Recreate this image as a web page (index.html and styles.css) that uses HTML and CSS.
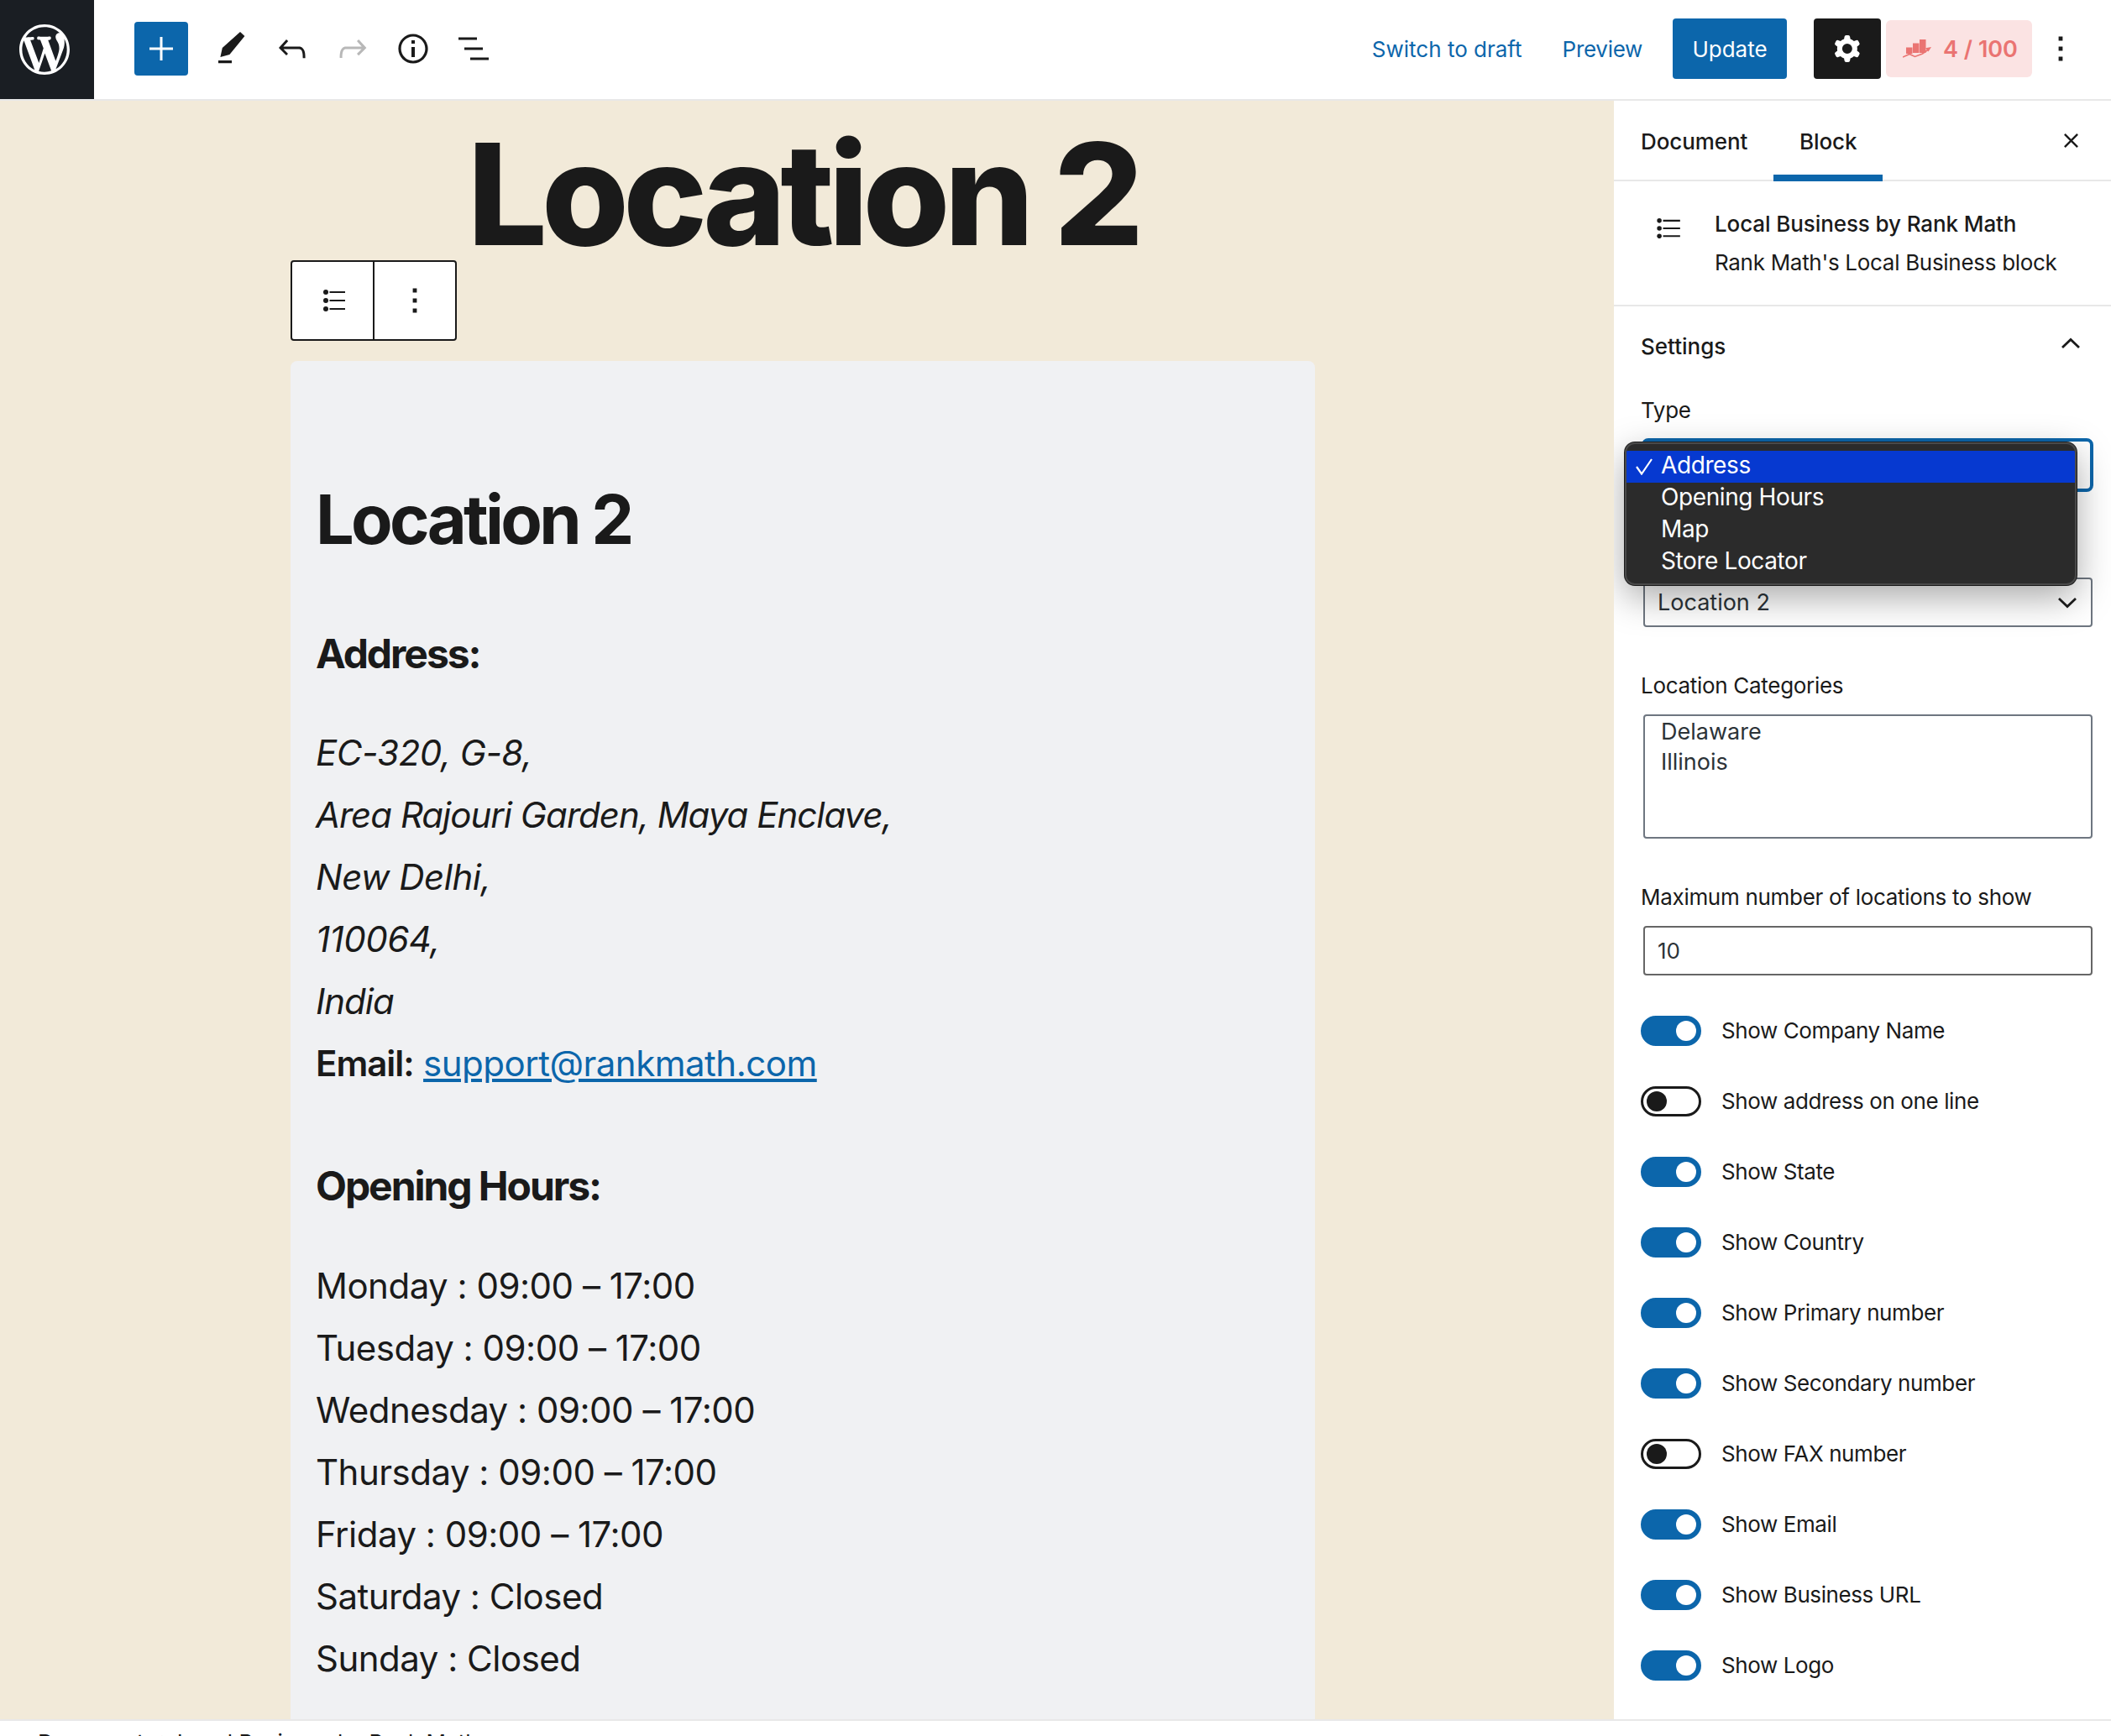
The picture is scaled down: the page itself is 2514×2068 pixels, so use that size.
FILE: index.html
```html
<!DOCTYPE html>
<html lang="en">
<head>
<meta charset="utf-8">
<title>Edit Location 2</title>
<link rel="stylesheet" href="styles.css">
</head>
<body>
<div class="app">
  <header class="topbar">
    <div class="wp-logo">
      <svg class="wp-svg" viewBox="0 0 20 20"><path fill="#fff" d="M20 10c0-5.51-4.49-10-10-10C4.48 0 0 4.49 0 10c0 5.52 4.48 10 10 10 5.51 0 10-4.48 10-10zM7.78 15.37L4.37 6.22c.55-.02 1.17-.08 1.17-.08.5-.06.44-1.13-.06-1.11 0 0-1.45.11-2.37.11-.18 0-.37 0-.58-.01C4.12 2.69 6.87 1.11 10 1.11c2.33 0 4.45.87 6.05 2.34-.68-.11-1.65.39-1.65 1.58 0 .74.45 1.36.9 2.1.35.61.55 1.36.55 2.46 0 1.49-1.4 5-1.4 5l-3.03-8.37c.54-.02.82-.17.82-.17.5-.05.44-1.25-.06-1.22 0 0-1.44.12-2.38.12-.87 0-2.33-.12-2.33-.12-.5-.03-.56 1.2-.06 1.22l.92.08 1.26 3.41zM17.41 10c.24-.64.74-1.87.43-4.25.7 1.29 1.05 2.71 1.05 4.25 0 3.29-1.73 6.24-4.4 7.78.97-2.59 1.94-5.2 2.92-7.78zM6.1 18.09C3.12 16.65 1.11 13.53 1.11 10c0-1.3.23-2.48.72-3.59C3.25 10.3 4.67 14.2 6.1 18.09zm4.03-6.63l2.58 6.98c-.86.29-1.76.45-2.71.45-.79 0-1.57-.11-2.29-.33.81-2.38 1.62-4.74 2.42-7.1z"/></svg>
    </div>
    <div class="tools">
      <button class="add-btn"><svg class="icon" viewBox="0 0 24 24"><path fill="#fff" d="M11.25 5h1.5v6.25H19v1.5h-6.25V19h-1.5v-6.25H5v-1.5h6.25z"/></svg></button>
      <svg class="icon tool" viewBox="0 0 24 24"><path fill="#1a1a1a" d="M17 2l2.700 2.500-9 11-5.500 1.500 1.200-5.500zM4 19h8v1.600H4z"/></svg>
      <svg class="icon tool" viewBox="0 0 24 24"><path fill="#1a1a1a" d="M18.3 11.7c-.6-.6-1.4-.9-2.3-.9H6.7l2.9-3.3-1.1-1-4.5 5L8.5 16l1-1-2.7-2.7H16c.5 0 .9.2 1.3.5 1 1 1 3.4 1 4.5v.3h1.5v-.2c0-1.5 0-4.3-1.5-5.7z"/></svg>
      <svg class="icon tool" viewBox="0 0 24 24"><path fill="#b8b8b8" d="M15.6 6.5l-1.1 1 2.9 3.3H8c-.9 0-1.7.3-2.3.9-1.4 1.5-1.4 4.2-1.4 5.6v.2h1.5v-.3c0-1.1 0-3.5 1-4.5.3-.3.7-.5 1.3-.5h9.2L14.5 15l1.1 1.1 4.6-4.6-4.6-5z"/></svg>
      <svg class="icon tool" viewBox="0 0 24 24"><path fill="#1a1a1a" d="M12 3.2c-4.8 0-8.8 3.9-8.8 8.8 0 4.8 3.9 8.8 8.8 8.8 4.8 0 8.8-3.900 8.800-8.800 0-4.800-4-8.800-8.800-8.800zm0 16c-4 0-7.200-3.300-7.200-7.200C4.800 8 8 4.800 12 4.800s7.200 3.300 7.200 7.200c0 4-3.200 7.200-7.200 7.200zM11 17h2v-6h-2v6zm0-8h2V7h-2v2z"/></svg>
      <svg class="icon tool" viewBox="0 0 24 24"><path fill="#1a1a1a" d="M3 5.250h11v1.500H3zM6.500 11.250h11v1.500h-11zM10 17.250h11v1.500H10z"/></svg>
    </div>
    <div class="actions">
      <a class="link switch">Switch to draft</a>
      <a class="link preview">Preview</a>
      <button class="update">Update</button>
      <button class="gear"><svg class="icon" viewBox="0 0 24 24"><path fill="#fff" fill-rule="evenodd" d="M10.289 4.836A1 1 0 0111.275 4h1.306a1 1 0 01.987.836l.244 1.466c.787.26 1.503.679 2.108 1.218l1.393-.522a1 1 0 011.216.437l.653 1.13a1 1 0 01-.23 1.273l-1.148.944a6.025 6.025 0 010 2.435l1.149.946a1 1 0 01.23 1.272l-.653 1.13a1 1 0 01-1.216.437l-1.394-.522c-.605.54-1.32.958-2.108 1.218l-.244 1.466a1 1 0 01-.987.836h-1.306a1 1 0 01-.986-.836l-.244-1.466a5.995 5.995 0 01-2.108-1.218l-1.394.522a1 1 0 01-1.217-.436l-.653-1.131a1 1 0 01.23-1.272l1.149-.946a6.026 6.026 0 010-2.435l-1.148-.944a1 1 0 01-.23-1.272l.653-1.131a1 1 0 011.217-.437l1.393.522a5.994 5.994 0 012.108-1.218l.244-1.466zM14.929 12a3 3 0 11-6 0 3 3 0 016 0z"/></svg></button>
      <div class="score">
        <svg class="rm-icon" viewBox="0 0 34 22"><path fill="#ea7472" d="M4 9.500h7.500V17H4zM12 4.500h7.500V16H12zM20 0h7.500v16H20z"/><path fill="none" stroke="#ea7472" stroke-width="1.600" d="M0 21l8-3.500 6.500 3 9-3.500 7-5"/><path fill="#ea7472" d="M34 9l-7 1.200 3.500 4.300z"/></svg>
        <span>4 / 100</span>
      </div>
      <svg class="icon kebab" viewBox="0 0 24 24"><path fill="#1a1a1a" d="M10.800 4.800h2.400v2.400h-2.400zM10.800 10.800h2.400v2.400h-2.400zM10.800 16.800h2.400v2.400h-2.400z"/></svg>
    </div>
  </header>

  <main class="main">
    <section class="canvas">
      <div class="column">
        <h1 class="post-title">Location 2</h1>
        <div class="block-toolbar">
          <div class="tb-cell"><svg class="list-icon" viewBox="0 0 26 26"><path fill="#1a1a1a" d="M7.500 2h18.500v2H7.500zM7.500 12h18.500v2H7.500zM7.500 22h18.500v2H7.500z"/><circle fill="#1a1a1a" cx="3" cy="3" r="3"/><circle fill="#1a1a1a" cx="3" cy="13" r="3"/><circle fill="#1a1a1a" cx="3" cy="23" r="3"/></svg></div>
          <div class="tb-cell tb-last"><svg class="icon" viewBox="0 0 24 24"><path fill="#1a1a1a" d="M10.800 4.800h2.400v2.400h-2.400zM10.800 10.800h2.400v2.400h-2.400zM10.800 16.800h2.400v2.400h-2.400z"/></svg></div>
        </div>
        <article class="card">
          <h2 class="loc-name">Location 2</h2>
          <h4 class="sub sub-first">Address:</h4>
          <div class="lines first-lines">
            <p class="addr">EC-320, G-8,</p>
            <p class="addr addr-tight">Area Rajouri Garden, Maya Enclave,</p>
            <p class="addr">New Delhi,</p>
            <p class="addr">110064,</p>
            <p class="addr addr-tight">India</p>
            <p><strong>Email:</strong> <a class="mail">support@rankmath.com</a></p>
          </div>
          <h4 class="sub sub-hours">Opening Hours:</h4>
          <div class="lines hours">
            <p>Monday : 09:00 – 17:00</p>
            <p>Tuesday : 09:00 – 17:00</p>
            <p>Wednesday : 09:00 – 17:00</p>
            <p>Thursday : 09:00 – 17:00</p>
            <p>Friday : 09:00 – 17:00</p>
            <p>Saturday : Closed</p>
            <p>Sunday : Closed</p>
          </div>
        </article>
      </div>
    </section>

    <aside class="sidebar">
      <div class="tabs">
        <div class="tab tab-doc">Document</div>
        <div class="tab tab-active">Block</div>
        <svg class="close" viewBox="0 0 20 20"><path fill="none" stroke="#1a1a1a" stroke-width="2.500" d="M2 2l16 16M18 2L2 18"/></svg>
      </div>
      <div class="block-card">
        <svg class="bc-icon" viewBox="0 0 30 26"><path fill="#1a1a1a" d="M8 2h22v2.200H8zM8 12h22v2.200H8zM8 22h22v2.200H8z"/><circle fill="#1a1a1a" cx="3.200" cy="3.100" r="3"/><circle fill="#1a1a1a" cx="3.200" cy="13.100" r="3"/><circle fill="#1a1a1a" cx="3.200" cy="23.100" r="3"/></svg>
        <div class="bc-text">
          <div class="bc-title">Local Business by Rank Math</div>
          <div class="bc-desc">Rank Math's Local Business block</div>
        </div>
      </div>
      <div class="panel">
        <div class="panel-head">
          <span>Settings</span>
          <svg class="chev-up" viewBox="0 0 24 14"><path fill="none" stroke="#1a1a1a" stroke-width="2.800" d="M2 12L12 2.500 22 12"/></svg>
        </div>
        <div class="field-label label-type">Type</div>
        <div class="select-wrap">
          <div class="control focus">
            <svg class="chev-down" viewBox="0 0 24 14"><path fill="none" stroke="#1e1e1e" stroke-width="2.800" d="M2 2l10 9.500L22 2"/></svg>
          </div>
          <div class="menu">
            <div class="opt opt-on"><svg class="tick" viewBox="0 0 20 20"><path fill="none" stroke="#fff" stroke-width="2.200" d="M1 10l6 8.500L19 1"/></svg>Address</div>
            <div class="opt">Opening Hours</div>
            <div class="opt">Map</div>
            <div class="opt">Store Locator</div>
          </div>
        </div>
        <div class="control location">
          <span>Location 2</span>
          <svg class="chev-down" viewBox="0 0 24 14"><path fill="none" stroke="#1e1e1e" stroke-width="2.800" d="M2 2l10 9.500L22 2"/></svg>
        </div>
        <div class="field-label label-gap">Location Categories</div>
        <div class="control multi">
          <div>Delaware</div>
          <div>Illinois</div>
        </div>
        <div class="field-label label-gap">Maximum number of locations to show</div>
        <div class="control number">10</div>
        <div class="toggles">
          <div class="toggle-row"><span class="toggle on"></span><span class="toggle-text">Show Company Name</span></div>
          <div class="toggle-row"><span class="toggle"></span><span class="toggle-text">Show address on one line</span></div>
          <div class="toggle-row"><span class="toggle on"></span><span class="toggle-text">Show State</span></div>
          <div class="toggle-row"><span class="toggle on"></span><span class="toggle-text">Show Country</span></div>
          <div class="toggle-row"><span class="toggle on"></span><span class="toggle-text">Show Primary number</span></div>
          <div class="toggle-row"><span class="toggle on"></span><span class="toggle-text">Show Secondary number</span></div>
          <div class="toggle-row"><span class="toggle"></span><span class="toggle-text">Show FAX number</span></div>
          <div class="toggle-row"><span class="toggle on"></span><span class="toggle-text">Show Email</span></div>
          <div class="toggle-row"><span class="toggle on"></span><span class="toggle-text">Show Business URL</span></div>
          <div class="toggle-row"><span class="toggle on"></span><span class="toggle-text">Show Logo</span></div>
        </div>
      </div>
    </aside>
  </main>

  <footer class="statusbar">Document → Local Business by Rank Math</footer>
</div>
</body>
</html>
```

FILE: styles.css
```css
* { box-sizing: border-box; }
html, body { margin: 0; height: 100%; overflow: hidden; }
body { font-family: Inter, "Noto Sans", sans-serif; font-size: 26px; color: #1a1a1a; background: #fff; }
button { font: inherit; border: 0; padding: 0; }
p, h1, h2, h4 { margin: 0; }

.app { display: flex; flex-direction: column; height: 100vh; }

/* Top bar */
.topbar { flex: 0 0 120px; display: flex; align-items: flex-start; background: #fff; border-bottom: 2px solid #e8e8e8; }
.wp-logo { flex: 0 0 112px; height: 118px; background: #1a1e23; display: flex; align-items: center; justify-content: center; padding: 0 6px 0 0; }
.wp-svg { width: 60px; height: 60px; }
.tools { display: flex; align-items: center; height: 116px; margin-left: 48px; }
.add-btn { width: 64px; height: 64px; background: #0c66ab; border-radius: 4px; display: flex; align-items: center; justify-content: center; margin-right: 28px; }
.icon { width: 48px; height: 48px; display: block; }
.tool { margin-right: 24px; }
.actions { margin-left: auto; display: flex; align-items: center; height: 116px; }
.link { color: #0c66ab; }
.switch { margin-right: 48px; }
.preview { margin-right: 36px; letter-spacing: -0.3px; }
.update { width: 136px; height: 72px; background: #0c66ab; color: #fff; border-radius: 4px; margin-right: 32px; }
.gear { width: 80px; height: 72px; background: #1a1a1a; border-radius: 4px; display: flex; align-items: center; justify-content: center; margin-right: 6px; }
.score { width: 174px; height: 68px; background: #fbe3e3; border-radius: 6px; display: flex; align-items: center; justify-content: center; gap: 14px; padding-left: 3px; color: #ea7472; font-weight: 600; font-size: 27px; }
.rm-icon { width: 34px; height: 22px; }
.kebab { margin-left: 10px; margin-right: 36px; }

/* Main */
.main { flex: 1; display: flex; min-height: 0; }
.canvas { flex: 1; min-width: 0; background: #f2ead9; overflow: hidden; padding-top: 32px; }
.column { width: 1220px; margin-left: 346px; }
.post-title { font-size: 168px; line-height: 158px; font-weight: 800; letter-spacing: -0.04em; text-align: center; color: #1a1a1a; }
.block-toolbar { display: flex; width: 198px; height: 96px; background: #fff; border: 2px solid #1a1a1a; border-radius: 4px; }
.tb-cell { flex: 1; display: flex; align-items: center; justify-content: center; border-right: 2px solid #1a1a1a; }
.tb-last { border-right: 0; }
.list-icon { width: 26px; height: 26px; margin-left: 3px; }
.card { margin-top: 24px; background: #f0f1f3; border-radius: 8px 8px 0 0; padding: 138.500px 30px 120px; }
.loc-name { font-size: 81px; line-height: 100px; font-weight: 700; letter-spacing: -0.046em; }
.sub { font-size: 48px; line-height: 60px; font-weight: 700; letter-spacing: -0.043em; }
.sub-first { margin-top: 80px; }
.sub-hours { margin-top: 79px; }
.lines { font-size: 42px; line-height: 74px; font-weight: 400; letter-spacing: -0.5px; }
.first-lines { margin-top: 51px; }
.hours { margin-top: 52px; }
.addr { font-style: italic; letter-spacing: -0.5px; }
.addr-tight { letter-spacing: -1px; }
.lines strong { font-weight: 600; letter-spacing: -1px; }
.mail { color: #0c66ab; text-decoration: underline; }

/* Sidebar */
.sidebar { flex: 0 0 592px; background: #fff; overflow: hidden; }
.tabs { height: 96px; display: flex; align-items: center; border-bottom: 2px solid #e8e8e8; position: relative; }
.tab { height: 96px; padding-top: 2px; display: flex; align-items: center; font-weight: 500; letter-spacing: -0.1px; }
.tab-doc { margin-left: 32px; }
.tab-active { margin-left: 31px; width: 130px; justify-content: center; border-bottom: 8px solid #0c66ab; padding-top: 8px; margin-bottom: -2px; }
.close { width: 19px; height: 19px; margin-left: auto; margin-right: 38px; }

.block-card { height: 149px; border-bottom: 2px solid #e8e8e8; display: flex; align-items: flex-start; padding: 32px 0 0 51px; }
.bc-icon { width: 28px; height: 24px; margin-top: 12px; flex: none; }
.bc-text { margin-left: 41px; }
.bc-title { line-height: 38px; font-weight: 500; letter-spacing: -0.1px; }
.bc-desc { line-height: 38px; margin-top: 8px; letter-spacing: -0.3px; }

.panel { padding: 0 20px 0 33px; }
.panel-head { height: 94px; display: flex; align-items: center; justify-content: space-between; font-weight: 500; padding-right: 16px; margin-left: -1px; }
.chev-up { width: 24px; height: 14px; margin-top: -6px; }
.field-label { line-height: 30px; letter-spacing: -0.3px; margin-left: -1px; }
.label-type { margin-top: 15px; }
.label-gap { margin-top: 55px; margin-bottom: -1px; }
.select-wrap { position: relative; margin-top: 18px; }
.control { margin: 0 2px; background: #fff; border: 2px solid #6e7680; border-radius: 4px; }
.control.focus { margin: 0 1px 0 0; height: 64px; border: 4px solid #0c66ab; border-radius: 8px; display: flex; align-items: center; justify-content: flex-end; padding: 0 14px 4px 0; }
.menu { position: absolute; left: -20px; top: 5px; width: 538px; height: 170px; padding: 8px 0 0; background: #2b2b2b; border: 2px solid #4a4a4a; border-radius: 12px; color: #fff; font-size: 28px; line-height: 34px; letter-spacing: -0.4px; box-shadow: 0 14px 44px rgba(0,0,0,.35), 0 0 0 1px #222; overflow: hidden; }
.opt { height: 38px; padding-left: 41px; position: relative; white-space: nowrap; }
.opt-on { background: #0639d0; }
.tick { position: absolute; left: 11px; top: 9px; width: 20px; height: 20px; }
.location { margin-top: 102px; height: 59px; display: flex; align-items: center; justify-content: space-between; padding: 0 16px 0 15px; font-size: 27px; color: #2c3338; border-color: #6e7680; }
.chev-down { width: 24px; height: 14px; }
.multi { margin-top: 20px; height: 148px; padding: 1px 0 0 19px; font-size: 27px; line-height: 36px; color: #2c3338; border-color: #6e7680; }
.number { margin-top: 20px; height: 59px; display: flex; align-items: center; padding-left: 15px; color: #2c3338; border-color: #666; }
.toggles { margin-top: 48px; display: flex; flex-direction: column; gap: 48px; }
.toggle-row { height: 36px; display: flex; align-items: center; gap: 24px; margin-left: -1px; }
.toggle-text { margin-top: -1px; letter-spacing: -0.4px; }
.toggle { width: 72px; height: 36px; flex: none; border-radius: 18px; border: 3px solid #1a1a1a; background: #fff; display: flex; align-items: center; padding-left: 4px; }
.toggle::after { content: ""; width: 24px; height: 24px; border-radius: 50%; background: #1a1a1a; }
.toggle.on { background: #0c66ab; border-color: #0c66ab; justify-content: flex-end; padding: 0 3px 0 0; }
.toggle.on::after { background: #fff; }

/* Status bar */
.statusbar { flex: 0 0 20px; border-top: 2px solid #e8e8e8; padding: 13px 0 0 45px; line-height: 26px; overflow: hidden; background: #fff; white-space: nowrap; }
```
